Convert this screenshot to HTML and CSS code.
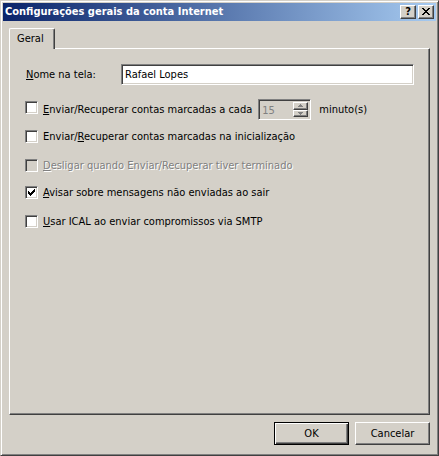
FILE: index.html
```html
<!DOCTYPE html>
<html lang="pt">
<head>
<meta charset="utf-8">
<title>Configurações gerais da conta Internet</title>
<link rel="stylesheet" href="styles.css">
</head>
<body>
<div class="window">
  <div class="titlebar">
    <span class="title">Configurações gerais da conta Internet</span>
    <div class="tb-buttons">
      <span class="tb-btn help">?</span>
      <span class="tb-btn close">
        <svg width="8" height="7" viewBox="0 0 8 7"><path d="M0 0h2v1H0zM6 0h2v1H6zM1 1h2v1H1zM5 1h2v1H5zM2 2h4v1H2zM3 3h2v1H3zM2 4h4v1H2zM1 5h2v1H1zM5 5h2v1H5zM0 6h2v1H0zM6 6h2v1H6z" fill="#000"/></svg>
      </span>
    </div>
  </div>
  <div class="body">
    <div class="tabs"><div class="tab">Geral</div></div>
    <div class="panel">
      <div class="name-row">
        <span class="name-label"><u>N</u>ome na tela:</span>
        <div class="textbox">Rafael Lopes</div>
      </div>
      <div class="row r1">
        <span class="cb top"></span>
        <span class="lbl"><u>E</u>nviar/Recuperar contas marcadas a cada</span>
        <div class="spin">
          <span class="spin-val">15</span>
          <div class="spin-btns">
            <span class="sb"><svg width="5" height="3" viewBox="0 0 5 3"><path d="M2 0h1v1h1v1h1v1H0V2h1V1h1z" fill="#808080"/></svg></span>
            <span class="sb"><svg width="5" height="3" viewBox="0 0 5 3"><path d="M0 0h5v1H4v1H3v1H2V2H1V1H0z" fill="#808080"/></svg></span>
          </div>
        </div>
        <span class="unit">minuto(s)</span>
      </div>
      <div class="row r2">
        <span class="cb"></span>
        <span class="lbl">Enviar/<u>R</u>ecuperar contas marcadas na inicialização</span>
      </div>
      <div class="row r3 disabled">
        <span class="cb"></span>
        <span class="lbl"><u>D</u>esligar quando Enviar/Recuperar tiver terminado</span>
      </div>
      <div class="row r4">
        <span class="cb">
          <svg width="9" height="9" viewBox="0 0 9 9"><path d="M1 3h1v3H1zM2 4h1v3H2zM3 5h1v3H3zM4 4h1v3H4zM5 3h1v3H5zM6 2h1v3H6zM7 1h1v3H7z" fill="#000"/></svg>
        </span>
        <span class="lbl"><u>A</u>visar sobre mensagens não enviadas ao sair</span>
      </div>
      <div class="row r5">
        <span class="cb"></span>
        <span class="lbl"><u>U</u>sar ICAL ao enviar compromissos via SMTP</span>
      </div>
    </div>
    <div class="buttons">
      <div class="btn default"><span>OK</span></div>
      <div class="btn"><span>Cancelar</span></div>
    </div>
  </div>
</div>
</body>
</html>
```

FILE: styles.css
```css
* { box-sizing: border-box; }
html, body { margin: 0; padding: 0; background: #d4d0c8; }
body {
  font-family: "DejaVu Sans", sans-serif;
  font-stretch: condensed;
  font-size: 11px;
  color: #000;
}
u { text-decoration: underline; text-underline-offset: 1px; }

.window {
  width: 439px;
  height: 456px;
  background: #d4d0c8;
  border: 1px solid;
  border-color: #d4d0c8 #404040 #404040 #d4d0c8;
  box-shadow: inset 1px 1px 0 #fff, inset -1px -1px 0 #808080;
  padding: 2px;
  display: flex;
  flex-direction: column;
}

.titlebar {
  height: 18px;
  flex: none;
  background: linear-gradient(to right, #0a246a, #a6caf0);
  display: flex;
  align-items: center;
  justify-content: space-between;
  padding: 0 2px 0 2px;
}
.title {
  color: #fff;
  font-weight: bold;
  font-size: 11px;
  line-height: 18px;
  white-space: nowrap;
}
.tb-buttons { display: flex; gap: 2px; }
.tb-btn {
  width: 16px;
  height: 14px;
  background: #d4d0c8;
  border: 1px solid;
  border-color: #fff #404040 #404040 #fff;
  box-shadow: inset -1px -1px 0 #808080;
  display: flex;
  align-items: center;
  justify-content: center;
}
.tb-btn.help {
  font-weight: bold;
  font-size: 11px;
  line-height: 12px;
  padding-bottom: 1px;
}
.tb-btn.close svg { display: block; margin-bottom: 1px; }

.body {
  flex: 1;
  display: flex;
  flex-direction: column;
  padding: 7px 6px 0 6px;
}
.tabs { display: flex; height: 20px; flex: none; }
.tab {
  position: relative;
  z-index: 1;
  width: 46px;
  height: 21px;
  background: #d4d0c8;
  border-left: 1px solid #fff;
  border-top: 1px solid #fff;
  border-right: 1px solid #404040;
  border-top-left-radius: 2px;
  border-top-right-radius: 2px;
  box-shadow: inset -1px 0 0 #808080;
  padding: 3px 0 0 7px;
  line-height: 13px;
}
.panel {
  height: 367px;
  flex: none;
  border: 1px solid;
  border-color: #fff #404040 #404040 #fff;
  box-shadow: inset -1px -1px 0 #808080;
  padding: 15px 15px 0 15px;
  display: flex;
  flex-direction: column;
}

.name-row { display: flex; align-items: center; height: 21px; }
.name-label { width: 96px; padding-left: 1px; }
.textbox {
  width: 293px;
  height: 21px;
  background: #fff;
  border: 1px solid;
  border-color: #808080 #fff #fff #808080;
  box-shadow: inset 1px 1px 0 #404040, inset -1px -1px 0 #d4d0c8;
  padding-left: 3px;
  line-height: 19px;
}

.row { display: flex; align-items: center; height: 13px; line-height: 13px; }
.row.r1 { height: 21px; margin-top: 14px; }
.row.r2 { margin-top: 10px; }
.row.r3 { margin-top: 16px; }
.row.r4 { margin-top: 14px; }
.row.r5 { margin-top: 16px; }

.cb {
  width: 13px;
  height: 13px;
  flex: none;
  background: #fff;
  border: 1px solid;
  border-color: #808080 #fff #fff #808080;
  box-shadow: inset 1px 1px 0 #404040, inset -1px -1px 0 #d4d0c8;
  padding: 1px;
  display: flex;
}
.cb svg { display: block; }
.cb.top { align-self: flex-start; margin-top: 2px; }
.lbl { margin-left: 5px; white-space: nowrap; }
.disabled .cb { background: #d4d0c8; }
.disabled .lbl { color: #808080; text-shadow: 1px 1px 0 #fff; }

.spin {
  margin-left: 6px;
  width: 53px;
  height: 21px;
  background: #d4d0c8;
  border: 1px solid;
  border-color: #808080 #fff #fff #808080;
  box-shadow: inset 1px 1px 0 #404040, inset -1px -1px 0 #d4d0c8;
  padding: 2px 2px 2px 3px;
  display: flex;
  justify-content: space-between;
}
.spin-val { color: #808080; line-height: 17px; }
.spin-btns { width: 15px; display: flex; flex-direction: column; }
.sb {
  flex: 1;
  background: #d4d0c8;
  border: 1px solid;
  border-color: #fff #404040 #404040 #fff;
  box-shadow: inset -1px -1px 0 #808080;
  display: flex;
  align-items: center;
  justify-content: center;
}
.sb svg { display: block; }
.unit { margin-left: 8px; }

.buttons {
  display: flex;
  justify-content: flex-end;
  gap: 6px;
  margin-top: 7px;
}
.btn {
  width: 75px;
  height: 23px;
  border: 1px solid;
  border-color: #fff #404040 #404040 #fff;
  box-shadow: inset -1px -1px 0 #808080;
  display: flex;
  align-items: center;
  justify-content: center;
}
.btn.default {
  border-color: #000;
  box-shadow: inset 1px 1px 0 #fff, inset -1px -1px 0 #404040, inset -2px -2px 0 #808080;
}
```
